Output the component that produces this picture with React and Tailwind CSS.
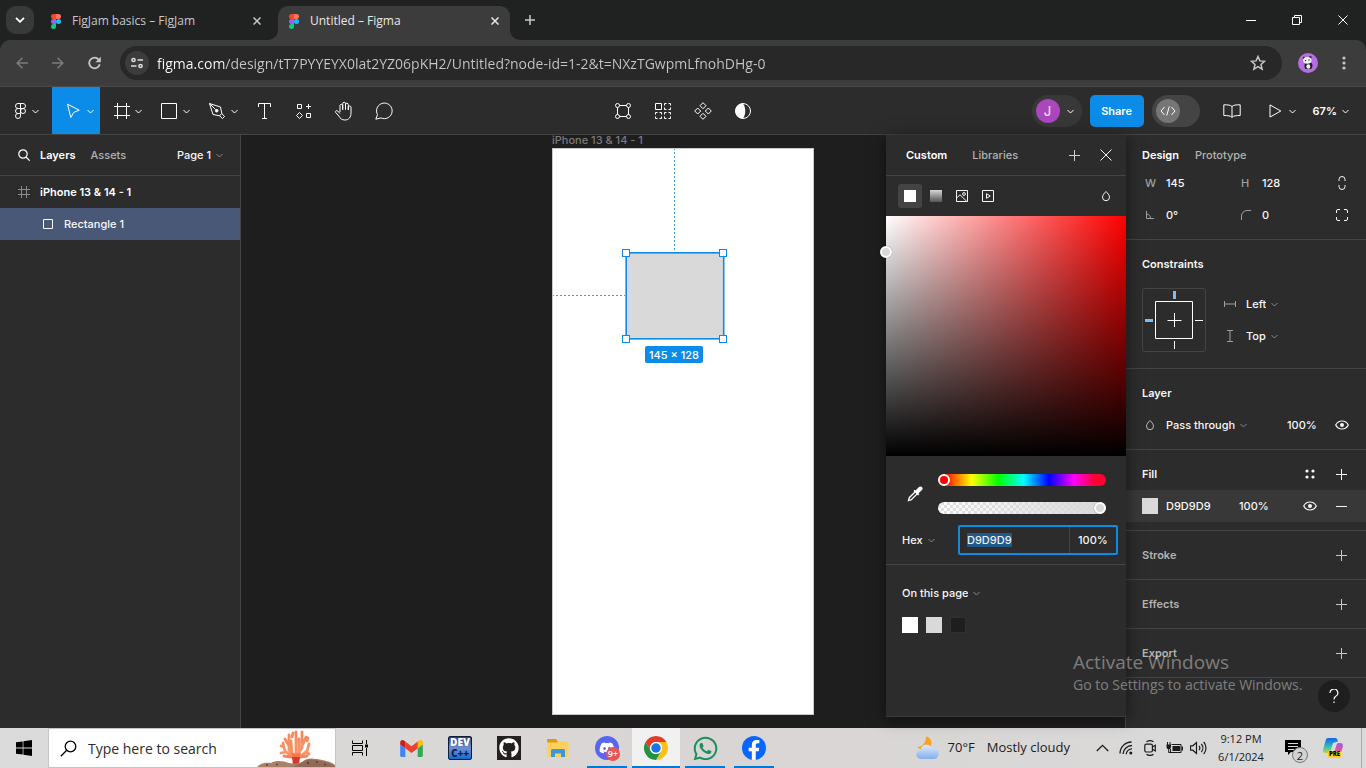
import { useEffect, useRef } from "react";
import { FaDiscord, FaFacebookF, FaGithub, FaWhatsapp } from "react-icons/fa";

const SEGOE = "font-['Open_Sans','Noto_Sans',sans-serif]";

function Icon({ w = 16, h = w, children, className = "", sw = 1, fill = "none" }) {
  return (
    <svg
      width={w}
      height={h}
      viewBox={`0 0 ${w} ${h}`}
      fill={fill}
      stroke="currentColor"
      strokeWidth={sw}
      className={`shrink-0 ${className}`}
      aria-hidden="true"
    >
      {children}
    </svg>
  );
}

const Chevron = ({ className = "" }) => (
  <Icon w={7} h={5} className={className}>
    <path d="M.5 1l3 3 3-3" />
  </Icon>
);
const Plus = ({ size = 11, sw = 1, className = "" }) => (
  <Icon w={size} sw={sw} className={className}>
    <path d={`M${size / 2} 0v${size}M0 ${size / 2}h${size}`} />
  </Icon>
);
const Cross = ({ size = 10, sw = 1 }) => (
  <Icon w={size} sw={sw}>
    <path d={`M.5 .5l${size - 1} ${size - 1}M${size - 0.5} .5L.5 ${size - 0.5}`} />
  </Icon>
);
const Drop = () => (
  <Icon w={10} h={12}>
    <path d="M5 1.5C6.5 3.2 8.5 5 8.5 7.2a3.5 3.5 0 0 1-7 0C1.500 5 3.500 3.200 5 1.500z" />
  </Icon>
);
const Eye = () => (
  <Icon w={14} h={10} sw={1.2}>
    <path d="M.7 5C2 2.400 4.400 1 7 1s5 1.400 6.300 4C12 7.600 9.600 9 7 9S2 7.600.7 5z" />
    <circle cx="7" cy="5" r="2" fill="currentColor" stroke="none" />
  </Icon>
);
const FigmaLogo = () => (
  <Icon w={10} h={15}>
    <g stroke="none">
      <path d="M2.500 0H5v5H2.500a2.500 2.500 0 0 1 0-5z" fill="#f24e1e" />
      <path d="M5 0h2.500a2.500 2.500 0 0 1 0 5H5z" fill="#ff7262" />
      <path d="M2.500 5H5v5H2.500a2.500 2.500 0 0 1 0-5z" fill="#a259ff" />
      <circle cx="7.500" cy="7.500" r="2.500" fill="#1abcfe" />
      <path d="M2.500 10H5v2.500A2.500 2.500 0 1 1 2.500 10z" fill="#0acf83" />
    </g>
  </Icon>
);

function TabStrip() {
  return (
    <div className="flex h-10 shrink-0 bg-[#202221] text-[#c7c7c7]">
      <button aria-label="Search tabs" className="mt-1.5 ml-1.5 flex size-7 shrink-0 items-center justify-center rounded-[10px] bg-[#383a39] text-white">
        <Icon w={10} h={6} sw={1.8}>
          <path d="M1 .8l4 4 4-4" />
        </Icon>
      </button>
      <div className="mt-1.5 flex h-[30px] w-[244px] items-center pr-[17px] pl-[17px]">
        <FigmaLogo />
        <span className="ml-[11px] flex-1 text-[12px]">FigJam basics – FigJam</span>
        <button aria-label="Close FigJam basics"><Cross size={8} sw={1.500} /></button>
      </div>
      <div className="relative mt-1.5 flex h-[34px] w-[232px] items-center rounded-t-[10px] bg-[#3c3c3c] px-[11px] pb-1 text-[#e8e8e8]">
        <svg width="10" height="10" className="absolute bottom-0 -left-2.5" aria-hidden="true">
          <path d="M10 0v10H0A10 10 0 0 0 10 0z" fill="#3c3c3c" />
        </svg>
        <svg width="10" height="10" className="absolute -right-2.5 bottom-0" aria-hidden="true">
          <path d="M0 0v10h10A10 10 0 0 1 0 0z" fill="#3c3c3c" />
        </svg>
        <FigmaLogo />
        <span className="ml-[11px] flex-1 text-[12px]">Untitled – Figma</span>
        <button aria-label="Close Untitled"><Cross size={8} sw={1.500} /></button>
      </div>
      <button aria-label="New tab" className="ml-2 flex w-6 items-center justify-center"><Plus size={10} sw={1.500} /></button>
      <div className="ml-auto flex text-white">
        <button aria-label="Minimize" className="flex w-[46px] items-center justify-center"><Icon w={10} h={1}><path d="M0 .5h10" /></Icon></button>
        <button aria-label="Restore" className="flex w-[46px] items-center justify-center">
          <Icon w={10}><path d="M.5 2.500h7v7h-7zM2.500 2.500v-2h7v7h-2" /></Icon>
        </button>
        <button aria-label="Close" className="flex w-[46px] items-center justify-center"><Cross size={10} /></button>
      </div>
    </div>
  );
}

function AddressBar() {
  return (
    <div className="shrink-0 bg-[#202221]">
      <div className="flex h-[47px] items-center rounded-t-[10px] border-b border-[#4a4a4a] bg-[#3c3c3c] pr-2.5 pl-1 text-[#c7c7c7]">
        <button aria-label="Back" className="flex size-9 items-center justify-center text-[#7c7c7c]">
          <Icon w={12} h={12} sw={1.500}><path d="M6.500 .7L1.200 6l5.300 5.300M1.200 6H12" /></Icon>
        </button>
        <button aria-label="Forward" className="flex size-9 items-center justify-center text-[#7c7c7c]">
          <Icon w={12} h={12} sw={1.500}><path d="M5.500 .7L10.800 6l-5.300 5.300M10.800 6H0" /></Icon>
        </button>
        <button aria-label="Reload" className="flex size-9 items-center justify-center">
          <Icon w={13} h={14} sw={1.800}>
            <path d="M11.700 8.200A5.300 5.300 0 1 1 10.600 3.600" />
            <path d="M12.800 .8v5.400H7.400l2-2z" fill="currentColor" stroke="none" />
          </Icon>
        </button>
        <div className="ml-2 flex h-[34px] flex-1 items-center rounded-full bg-[#282828] pr-4 pl-[5px]">
          <button aria-label="Site information" className="flex size-6 items-center justify-center rounded-full bg-[#3c3c3c] text-[#e0e0e0]">
            <Icon w={12} h={12} sw={1.500}>
              <circle cx="2.500" cy="3" r="1.600" />
              <path d="M6.500 3H12M0 9h5.500" />
              <circle cx="9.500" cy="9" r="1.600" />
            </Icon>
          </button>
          <input
            aria-label="Address"
            defaultValue="figma.com/design/tT7PYYEYX0lat2YZ06pKH2/Untitled?node-id=1-2&t=NXzTGwpmLfnohDHg-0"
            className="ml-2 min-w-0 flex-1 bg-[linear-gradient(to_right,#ffffff_67px,#c7c7c7_67px)] bg-clip-text text-[14px] text-transparent outline-none"
          />
          <button aria-label="Bookmark this tab">
            <Icon w={16} h={16} sw={1.500}><path d="M8 1.500l1.900 4.400 4.700.4-3.600 3.100 1.100 4.700L8 11.600l-4.100 2.500L5 9.400 1.400 6.300l4.700-.4z" /></Icon>
          </button>
        </div>
        <button aria-label="Profile" className="ml-4">
          <Icon w={20}>
            <g stroke="none">
              <circle cx="10" cy="10" r="10" fill="#b66fe3" />
              <path d="M6.500 12c0-2 1.500-3 4-3s4 1.200 4 3.500-1 3.500-2 3.500H8c-1.500 0-1.500-2-1.500-4z" fill="#222" />
              <ellipse cx="10.300" cy="13.500" rx="2" ry="2.200" fill="#f4f4f4" />
              <circle cx="6" cy="5" r="1.200" fill="#222" />
              <circle cx="12.300" cy="4.200" r="1.200" fill="#222" />
              <ellipse cx="9.300" cy="7.300" rx="4.200" ry="3.400" fill="#f4f4f4" />
              <circle cx="7.600" cy="7.600" r=".7" fill="#222" />
              <circle cx="11" cy="7" r=".7" fill="#222" />
            </g>
          </Icon>
        </button>
        <button aria-label="Browser menu" className="ml-[14px] flex w-6 justify-center">
          <Icon w={4} h={14}>
            <g fill="currentColor" stroke="none"><circle cx="2" cy="2" r="1.600" /><circle cx="2" cy="7" r="1.600" /><circle cx="2" cy="12" r="1.600" /></g>
          </Icon>
        </button>
      </div>
    </div>
  );
}

function ToolMenu({ label, children, active }) {
  return (
    <button aria-label={label} className={`flex h-12 w-12 items-center justify-between pr-[6px] pl-3 ${active ? "bg-[#0c8ce9]" : ""}`}>
      {children}
      <Chevron />
    </button>
  );
}
const Tool = ({ label, children }) => (
  <button aria-label={label} className="flex h-12 w-10 items-center justify-center">{children}</button>
);

function Toolbar() {
  return (
    <header className="grid h-12 shrink-0 grid-cols-[1fr_auto_1fr] overflow-hidden border-b border-[#444444] bg-[#2c2c2c] text-white">
      <div className="flex">
        <button aria-label="Main menu" className="flex h-12 w-[52px] items-center gap-[6px] pl-[15px]">
          <Icon w={11} h={16}>
            <path d="M3 .5h2.500v5H3a2.500 2.500 0 0 1 0-5zM5.500 .5H8a2.500 2.500 0 0 1 0 5H5.500zM3 5.500h2.500v5H3a2.500 2.500 0 0 1 0-5zM8 5.500a2.500 2.500 0 1 1 0 5 2.500 2.500 0 0 1 0-5zM3 10.500h2.500V13A2.500 2.500 0 1 1 3 10.500z" />
          </Icon>
          <Chevron />
        </button>
        <ToolMenu label="Move" active>
          <Icon w={18} h={16}><path d="M3.500 1.200L15.200 7.200 9.800 9.300l-3 5.200z" /></Icon>
        </ToolMenu>
        <ToolMenu label="Frame">
          <Icon w={18}><path d="M5.500 1v16M14.500 1v16M2 4.500h16M2 13.500h16" /></Icon>
        </ToolMenu>
        <ToolMenu label="Rectangle">
          <Icon w={18} h={16}><path d="M1.500 .5h15v15h-15z" /></Icon>
        </ToolMenu>
        <ToolMenu label="Pen">
          <Icon w={18} h={16}>
            <path d="M1.500 .5L12.500 4l1.300 6.500 2.700 3-2 2-3-2.700L5 11.500zM1.500 .5l6 6M14 10.300L11.300 13" />
            <circle cx="8.700" cy="7.700" r="1.300" fill="currentColor" />
          </Icon>
        </ToolMenu>
        <div className="flex">
          <Tool label="Text"><Icon w={13} h={16}><path d="M.5 4V.5h12V4M6.500 .5v15M4 15.500h5" /></Icon></Tool>
          <Tool label="Resources">
            <Icon w={16}><path d="M1.500 1.500h4v4h-4zM10.500 10.500h4v4h-4zM12.500 1v5M10 3.500h5M3.500 9.500l3 3-3 3-3-3z" /></Icon>
          </Tool>
          <Tool label="Hand">
            <Icon w={20} h={20}>
              <path d="M6 11V4.300a1.400 1.400 0 0 1 2.700 0V9M8.700 8.500V2.700a1.400 1.400 0 0 1 2.800 0V8.500M11.500 8.500V3.600a1.400 1.400 0 0 1 2.800 0V9M14.300 9V6a1.400 1.400 0 0 1 2.700 0v6c0 4-2 7-6.200 7-3 0-4.500-1.500-6-4L1.500 11.300c-.6-1.200 1.200-2.300 2.200-1.300L6 12.500" />
            </Icon>
          </Tool>
          <Tool label="Comment">
            <Icon w={18}><path d="M.8 17.200l1.700-4.600A7.800 7.800 0 1 1 6 15.900z" /></Icon>
          </Tool>
        </div>
      </div>
      <div className="flex">
        <Tool label="Edit object">
          <Icon w={16}>
            <circle cx="2.500" cy="2.500" r="2" /><circle cx="13.500" cy="2.500" r="2" /><circle cx="2.500" cy="13.500" r="2" /><circle cx="13.500" cy="13.500" r="2" />
            <path d="M4.500 2.500h7M4.500 13.500h7M2.500 4.500v7M13.500 4.500v7" />
          </Icon>
        </Tool>
        <Tool label="Create grid">
          <Icon w={16}>
            <path d="M.5 .5h6v6h-6z" />
            <path d="M9.500 2.500v-2h2M13.500 .5h2v2M15.500 4.500v2h-2M11.500 6.500h-2v-2M.5 11.500v-2h2M4.500 9.500h2v2M6.500 13.500v2h-2M2.500 15.500h-2v-2M9.500 11.500v-2h2M13.500 9.500h2v2M15.500 13.500v2h-2M11.500 15.500h-2v-2" />
          </Icon>
        </Tool>
        <Tool label="Create component">
          <Icon w={18}><path d="M9 .7l3 3-3 3-3-3zM9 11.300l3 3-3 3-3-3zM3.700 6l3 3-3 3-3-3zM14.300 6l3 3-3 3-3-3z" /></Icon>
        </Tool>
        <Tool label="Mask">
          <Icon w={16}><circle cx="8" cy="8" r="7.500" /><path d="M8 .5c-10 0-10 15 0 15 3-4 3-11 0-15z" fill="currentColor" stroke="none" /></Icon>
        </Tool>
      </div>
      <div className="flex h-12 items-center justify-end text-[11px] font-medium">
        <button aria-label="Account J" className="flex h-8 w-[50px] items-center gap-[7px] rounded-full bg-[#383838] pl-1">
          <span className="flex size-6 items-center justify-center rounded-full bg-[#aa47bc] text-[13px] text-[#f0d8f4]">J</span>
          <Chevron />
        </button>
        <button className="ml-2 h-8 w-[54px] rounded-[5px] bg-[#0c8ce9] font-semibold">Share</button>
        <button role="switch" aria-checked="false" aria-label="Dev Mode" className="ml-2 flex h-8 w-12 items-center rounded-full bg-[#444444] pl-1">
          <span className="flex size-6 items-center justify-center rounded-full bg-[#767676]">
            <Icon w={16} h={10}><path d="M4.500 1L1 5l3.500 4M11.500 1L15 5l-3.500 4M9.300 .5l-2.600 9" /></Icon>
          </span>
        </button>
        <button aria-label="Libraries" className="ml-[23px]">
          <Icon w={18} h={14}><path d="M9 2.500C7.500 1 5 .8 .8 .8v10.700c4.200 0 6.700.3 8.200 1.800 1.500-1.500 4-1.800 8.200-1.800V.8C13 .8 10.500 1 9 2.500zM9 2.500v10.800" /></Icon>
        </button>
        <button aria-label="Present" className="ml-[28px] flex items-center gap-[7px]">
          <Icon w={13} h={14}><path d="M1 .9L11.800 7 1 13.100z" /></Icon>
          <Chevron />
        </button>
        <button className="mr-[17px] ml-[17px] flex items-center gap-[5px] font-semibold">67%<Chevron /></button>
      </div>
    </header>
  );
}

function LayersPanel() {
  return (
    <aside className="w-[241px] shrink-0 border-r border-[#444444] bg-[#2c2c2c]">
      <div className="flex h-[41px] items-center border-b border-[#444444] pr-[17px] pl-[18px]">
        <button aria-label="Search layers" className="text-white">
          <Icon w={12} sw={1.200}><circle cx="5" cy="5" r="4.200" /><path d="M8 8l3.700 3.700" /></Icon>
        </button>
        <button className="ml-[10px] font-semibold text-white">Layers</button>
        <button className="ml-[15px] text-[#b3b3b3]">Assets</button>
        <button className="ml-auto flex items-center gap-[5px]">Page 1<Chevron className="text-[#8a8a8a]" /></button>
      </div>
      <ul>
        <li className="flex h-8 items-center gap-[10px] pl-[18px] font-semibold text-white">
          <Icon w={12} className="text-[#8c8c8c]"><path d="M3.500 0v12M8.500 0v12M0 3.500h12M0 8.500h12" /></Icon>
          iPhone 13 &amp; 14 - 1
        </li>
        <li className="flex h-8 items-center gap-[11px] bg-[#4a5878] pl-[43px]">
          <Icon w={10}><path d="M.5 .5h9v9h-9z" /></Icon>
          Rectangle 1
        </li>
      </ul>
    </aside>
  );
}

function Artboard() {
  return (
    <div className="flex h-full justify-center overflow-hidden pt-[13px] pb-[13px]">
      <div className="relative h-full max-h-[567px] w-[262px] border border-[#c8c8c8] bg-white">
        <span className="absolute -top-4 -left-px leading-[14px] whitespace-nowrap text-[#7a7a7a]">iPhone 13 &amp; 14 - 1</span>
        <svg width="180" height="196" className="absolute -top-px -left-px" fill="none" aria-hidden="true">
          <path d="M122.500 1v103M1 147.500h72" stroke="#2ba0f5" strokeDasharray="2 2" strokeDashoffset="1" />
          <rect x="74.200" y="104.800" width="97.500" height="86" fill="#d9d9d9" stroke="#0c8ce9" strokeWidth="1.600" />
          <g fill="#fff" stroke="#0c8ce9">
            <rect x="70.500" y="101.500" width="7" height="7" />
            <rect x="167.500" y="101.500" width="7" height="7" />
            <rect x="70.500" y="187.500" width="7" height="7" />
            <rect x="167.500" y="187.500" width="7" height="7" />
          </g>
        </svg>
        <span className="absolute top-[197px] left-[92px] flex h-[17px] w-[58px] items-center justify-center rounded-[2px] bg-[#0c8ce9] whitespace-nowrap text-white">145 × 128</span>
      </div>
    </div>
  );
}

function Choice({ label, options, className = "" }) {
  return (
    <label className={`flex items-center gap-[5px] ${className}`}>
      <select aria-label={label} className="field-sizing-content appearance-none bg-transparent outline-none">
        {options.map((o) => <option key={o}>{o}</option>)}
      </select>
      <Chevron className="text-[#8a8a8a]" />
    </label>
  );
}

function ColorPicker() {
  const hex = useRef(null);
  useEffect(() => {
    hex.current.focus();
    hex.current.select();
  }, []);
  return (
    <section aria-label="Color picker" className="absolute top-0 -right-px z-10 h-[582px] w-60 border-b border-[#3c3c3c] bg-[#2c2c2c] shadow-[0_2px_14px_rgba(0,0,0,0.5)]">
      <div className="flex h-[41px] items-center border-b border-[#444444] pr-[14px] pl-5">
        <button className="font-semibold text-white">Custom</button>
        <button className="ml-[25px] text-[#b3b3b3]">Libraries</button>
        <button aria-label="Create style" className="ml-auto"><Plus className="text-[#d0d0d0]" /></button>
        <button aria-label="Close picker" className="ml-5"><Cross size={12} /></button>
      </div>
      <div className="flex h-10 items-center pr-[15px] pl-3">
        <button aria-label="Solid" className="flex size-6 items-center justify-center rounded-[3px] bg-[#444444]"><span className="size-3 bg-white" /></button>
        <button aria-label="Gradient" className="ml-2 size-3 bg-linear-to-b from-[#d8d8d8] to-[#555555]" />
        <button aria-label="Image" className="ml-[14px]">
          <Icon w={12}><path d="M.5 .5h11v11H.5zM.5 8L4 4.800l6.700 6.500" /><circle cx="8" cy="4" r="1.400" /></Icon>
        </button>
        <button aria-label="Video" className="ml-[14px]">
          <Icon w={12}><path d="M.5 .5h11v11H.5zM4.500 3.700L8.200 6 4.500 8.300z" /></Icon>
        </button>
        <button aria-label="Blend mode" className="ml-auto"><Drop /></button>
      </div>
      <div className="relative h-60 bg-[linear-gradient(to_top,#000,transparent),linear-gradient(to_right,#fff,#f00)]">
        <span className="absolute top-[30px] -left-1.5 size-3 rounded-full border-2 border-white bg-[#d9d9d9] shadow-[0_0_1px_rgba(0,0,0,0.5)]" />
      </div>
      <div className="flex items-center gap-[15px] pt-[18px] pr-5 pl-[21px] text-white">
        <button aria-label="Pick color">
          <Icon w={16}>
            <path d="M8.500 4.500l3.500-3.400a2 2 0 0 1 2.900 2.900L11.500 7.500l.8.800-1.200 1.200L6.500 4.900l1.200-1.200z" fill="currentColor" stroke="none" />
            <path d="M8 6l-5.700 5.700-.8 2.800 2.800-.8L10 8" strokeWidth="1.300" />
          </Icon>
        </button>
        <div className="flex flex-1 flex-col gap-4">
          <input
            type="range" aria-label="Hue" min="0" max="360" defaultValue="0"
            className="h-3 w-full appearance-none rounded-full bg-[linear-gradient(to_right,#f00_6px,#ff0_20%,#0f0_36%,#0ff_51%,#00f_66%,#f0f_81%,#f03_93%)] [&::-webkit-slider-thumb]:size-3 [&::-webkit-slider-thumb]:appearance-none [&::-webkit-slider-thumb]:rounded-full [&::-webkit-slider-thumb]:border-2 [&::-webkit-slider-thumb]:border-white [&::-webkit-slider-thumb]:bg-[#ff0000]"
          />
          <input
            type="range" aria-label="Opacity" min="0" max="100" defaultValue="100"
            className="h-3 w-full appearance-none rounded-full bg-[linear-gradient(to_right,transparent,#d9d9d9),repeating-conic-gradient(#e0e0e0_0_25%,#ffffff_0_50%)] bg-[length:100%_100%,6px_6px] [&::-webkit-slider-thumb]:size-3 [&::-webkit-slider-thumb]:appearance-none [&::-webkit-slider-thumb]:rounded-full [&::-webkit-slider-thumb]:border-2 [&::-webkit-slider-thumb]:border-white [&::-webkit-slider-thumb]:bg-[#d9d9d9] [&::-webkit-slider-thumb]:shadow-[0_0_1px_rgba(0,0,0,0.6)]"
          />
        </div>
      </div>
      <div className="flex items-center border-b border-[#444444] pt-[11px] pr-2 pb-[9px] pl-4">
        <Choice label="Color model" options={["Hex", "RGB", "HSL"]} />
        <div className="ml-auto flex h-[30px] w-40 items-center rounded-[2px] border-2 border-[#0c8ce9] leading-[14px]">
          <input ref={hex} aria-label="Hex value" defaultValue="D9D9D9" className="w-[109px] bg-transparent pl-[7px] outline-none selection:bg-[#215a8a] selection:text-[#f0f0f0]" />
          <input aria-label="Opacity value" defaultValue="100%" className="h-full w-12 flex-1 border-l border-[#444444] bg-transparent pl-2 outline-none" />
        </div>
      </div>
      <div className="px-4 pt-5">
        <Choice label="Color source" options={["On this page", "Local styles"]} />
        <div className="mt-4 flex gap-2">
          <button aria-label="FFFFFF" className="size-4 bg-white" />
          <button aria-label="D9D9D9" className="size-4 bg-[#d9d9d9]" />
          <button aria-label="1E1E1E" className="size-4 border border-[#303030] bg-[#1e1e1e]" />
        </div>
      </div>
    </section>
  );
}

function Field({ label, icon, value }) {
  return (
    <label className="flex h-8 w-24 items-center">
      <span className="flex w-6 items-center pl-[3px] text-[#a0a0a0]">{icon}</span>
      <input aria-label={label} defaultValue={value} className="w-14 bg-transparent outline-none" />
    </label>
  );
}

const Section = ({ children, className = "py-2" }) => (
  <section className={`border-b border-[#444444] ${className}`}>{children}</section>
);
const Title = ({ children, muted, extra }) => (
  <div className="flex h-8 items-center pr-[19px] pl-4">
    <h2 className={`flex-1 font-semibold ${muted ? "text-[#b3b3b3]" : ""}`}>{children}</h2>
    {extra}
  </div>
);

function DesignPanel() {
  return (
    <aside className="w-[241px] shrink-0 border-l border-[#444444] bg-[#2c2c2c]">
      <div className="flex h-8 items-center gap-4 pt-2 pl-4">
        <button className="font-semibold text-white">Design</button>
        <button className="text-[#b3b3b3]">Prototype</button>
      </div>
      <Section className="pb-2">
        <div className="flex items-center pr-[17px] pl-4">
          <Field label="Width" icon="W" value="145" />
          <Field label="Height" icon="H" value="128" />
          <button aria-label="Constrain proportions" className="ml-auto flex w-[14px] justify-center">
            <Icon w={8} h={14}><path d="M1 5V3.500a3 3 0 0 1 6 0V5M1 9v1.500a3 3 0 0 0 6 0V9" /></Icon>
          </button>
        </div>
        <div className="flex items-center pr-[17px] pl-4">
          <Field label="Rotation" icon={<Icon w={9} h={9}><path d="M1.500 0v7.500H9M1.500 3a4.500 4.500 0 0 1 4 4.500" /></Icon>} value="0°" />
          <Field label="Corner radius" icon={<Icon w={10} h={10}><path d="M.5 10V6A5.500 5.500 0 0 1 6 .5h4" /></Icon>} value="0" />
          <button aria-label="Independent corners" className="ml-auto flex w-[14px] justify-center">
            <Icon w={12}><path d="M.5 4V2A1.500 1.500 0 0 1 2 .5h2M8 .5h2A1.500 1.500 0 0 1 11.500 2v2M11.500 8v2a1.500 1.500 0 0 1-1.500 1.500H8M4 11.500H2A1.500 1.500 0 0 1 .5 10V8" /></Icon>
          </button>
        </div>
      </Section>
      <Section className="pt-2 pb-4">
        <Title>Constraints</Title>
        <div className="mt-2 flex pl-4">
          <Icon w={64}>
            <rect x=".5" y=".5" width="63" height="63" rx="1.500" stroke="#444444" />
            <path d="M13.500 13.500h37v37h-37zM32.500 25v14M25.500 32.500h14M53 32.500h8M32.500 53v8" stroke="#fff" />
            <path d="M32.500 3v8M3 32.500h8" stroke="#7bbdf5" strokeWidth="3" />
          </Icon>
          <div className="ml-[18px]">
            <div className="flex h-8 items-center gap-[10px]">
              <Icon w={12} h={6} className="text-[#a0a0a0]"><path d="M.5 0v6M11.500 0v6M.5 3h11" /></Icon>
              <Choice label="Horizontal constraint" options={["Left", "Right", "Center"]} />
            </div>
            <div className="flex h-8 items-center gap-[10px]">
              <Icon w={12} h={12} className="text-[#a0a0a0]"><path d="M3 .5h6M3 11.500h6M6 .5v11" /></Icon>
              <Choice label="Vertical constraint" options={["Top", "Bottom", "Center"]} />
            </div>
          </div>
        </div>
      </Section>
      <Section>
        <Title>Layer</Title>
        <div className="flex h-8 items-center pr-[17px] pl-[19px]">
          <span className="mr-[11px] text-[#c0c0c0]"><Drop /></span>
          <Choice label="Blend mode" options={["Pass through", "Normal"]} />
          <input aria-label="Layer opacity" defaultValue="100%" className="ml-auto w-8 bg-transparent outline-none" />
          <button aria-label="Toggle layer visibility" className="ml-4"><Eye /></button>
        </div>
      </Section>
      <Section>
        <Title
          extra={
            <>
              <button aria-label="Styles" className="mr-[21px]">
                <Icon w={10}>
                  <g fill="currentColor" stroke="none"><circle cx="2" cy="2" r="1.600" /><circle cx="8" cy="2" r="1.600" /><circle cx="2" cy="8" r="1.600" /><circle cx="8" cy="8" r="1.600" /></g>
                </Icon>
              </button>
              <button aria-label="Add fill"><Plus /></button>
            </>
          }
        >
          Fill
        </Title>
        <div className="flex h-8 items-center bg-[#383838] pr-[19px] pl-4">
          <button aria-label="Fill color" className="size-4 bg-[#d9d9d9]" />
          <input aria-label="Fill hex" defaultValue="D9D9D9" className="ml-2 w-[73px] bg-transparent outline-none" />
          <input aria-label="Fill opacity" defaultValue="100%" className="w-8 bg-transparent outline-none" />
          <button aria-label="Toggle fill visibility" className="ml-auto"><Eye /></button>
          <button aria-label="Remove fill" className="ml-[19px]"><Icon w={11} h={1}><path d="M0 .5h11" /></Icon></button>
        </div>
      </Section>
      {["Stroke", "Effects", "Export"].map((t) => (
        <Section key={t}>
          <Title muted extra={<button aria-label={`Add ${t.toLowerCase()}`} className="text-[#c8c8c8]"><Plus /></button>}>{t}</Title>
        </Section>
      ))}
    </aside>
  );
}

const Coral = () => (
  <svg width="80" height="38" viewBox="0 0 80 38" className="shrink-0 self-end" fill="none" aria-hidden="true">
    <defs>
      <linearGradient id="coral" x1="0" y1="0" x2="0" y2="38" gradientUnits="userSpaceOnUse">
        <stop stopColor="#ee8658" /><stop offset=".6" stopColor="#ff9468" /><stop offset="1" stopColor="#ee5f36" />
      </linearGradient>
    </defs>
    <g stroke="url(#coral)" strokeWidth="2.800" strokeLinecap="round" strokeLinejoin="round">
      <path d="M41 31V3M41 29l-7-8V6M41 27l6-8V3M39 29l-9-7-2-8M43 29l9-7 2-7M34 17l-4-7M47 17l4-9M37 25l-1-13M44 25V10M30 23l-4 1M51 23l3 2M37 8l1-4M29 18l-3-1M52 12l1-3M36 28l-7-1M45 28l7-1" />
    </g>
    <path d="M36 23c2 2 8 2 10 0l-2 7h-6z" fill="#f5784c" />
    <path d="M37 28h8l-1 8h-6z" fill="#d8382c" />
    <path d="M2 38c3-4 9-5 14-4 5-3 12-2 18 0 5 1 8 1 13-1 4-4 9-4 15-3 6 1 13 2 18 6v2z" fill="#a98069" />
    <path d="M46 34c4-4 9-4 15-3 6 1 13 2 19 6v1H38z" fill="#80594a" opacity=".55" />
    <g fill="#5d4036"><circle cx="12" cy="36" r="1" /><circle cx="22" cy="35.500" r="1" /><circle cx="53" cy="34" r="1.200" /><circle cx="62" cy="33" r="1" /><circle cx="70" cy="35.500" r="1" /></g>
  </svg>
);

const Chrome = () => (
  <svg width="24" height="24" viewBox="0 0 48 48" aria-hidden="true">
    <path d="M24 12h20.780A24 24 0 0 0 3.216 12L13.608 30A12 12 0 0 1 24 12z" fill="#e33b2e" />
    <path d="M34.391 30L24.007 48A24 24 0 0 0 44.780 12H24A12 12 0 0 1 34.391 30z" fill="#fbc116" />
    <path d="M13.609 30L3.218 12A24 24 0 0 0 24.025 48L34.395 30A12 12 0 0 1 13.609 30z" fill="#229342" />
    <circle cx="24" cy="24" r="12" fill="#fff" /><circle cx="24" cy="24" r="9.500" fill="#1a73e8" />
  </svg>
);

function AppButton({ label, children, running, active }) {
  return (
    <button aria-label={label} className={`relative flex w-12 items-center justify-center ${active ? "bg-[#f1f1f1]" : ""}`}>
      {children}
      {running && <span className={`absolute bottom-0 h-0.5 bg-[#0078d7] ${active ? "inset-x-0" : "inset-x-1"}`} />}
    </button>
  );
}
const TrayButton = ({ label, children }) => (
  <button aria-label={label} className="flex w-6 items-center justify-center">{children}</button>
);

function Taskbar() {
  return (
    <footer className={`flex h-10 shrink-0 bg-linear-to-r from-[#dbdbdb] via-[#d9d5d4] to-[#dadada] text-[#1b1b1b] ${SEGOE}`}>
      <button aria-label="Start" className="flex w-12 items-center justify-center">
        <Icon w={16}><path d="M0 2.300l6.700-.9v6.200H0zM7.400 1.300L16 0v7.600H7.400zM0 8.400h6.700v6.200L0 13.700zM7.400 8.400H16V16l-8.600-1.300z" fill="#000" stroke="none" /></Icon>
      </button>
      <label className="flex w-[288px] items-center overflow-hidden border border-[#c4c4c4] bg-white pl-[11px]">
        <Icon w={17} h={17} sw={1.300} className="text-black"><circle cx="10.500" cy="6.500" r="5.300" /><path d="M6.700 10.300L.8 16.200" /></Icon>
        <input aria-label="Search" placeholder="Type here to search" className="ml-[11px] min-w-0 flex-1 text-[14px] outline-none placeholder:text-[#2c2c2c]" />
        <Coral />
      </label>
      <button aria-label="Task view" className="flex w-12 items-center justify-center text-black">
        <Icon w={16}>
          <path d="M.5 .5v3h10v-3M.5 5.500h10v5H.5zM.5 15.500v-3h10v3M14.500 0v4M14.500 8v8" /><path d="M13 4.500h3v3h-3z" fill="currentColor" stroke="none" />
        </Icon>
      </button>
      <div className="ml-[3px] flex gap-px">
        <AppButton label="Gmail">
          <svg width="23" height="17" viewBox="52 42 88 66" aria-hidden="true">
            <path fill="#4285f4" d="M58 108h14V74L52 59v43c0 3.320 2.690 6 6 6" />
            <path fill="#34a853" d="M120 108h14c3.320 0 6-2.690 6-6V59l-20 15" />
            <path fill="#fbbc04" d="M120 48v26l20-15v-8c0-7.420-8.470-11.650-14.400-7.200" />
            <path fill="#ea4335" d="M72 74V48l24 18 24-18v26L96 92" />
            <path fill="#c5221f" d="M52 51v8l20 15V48l-5.600-4.200c-5.940-4.450-14.400-.22-14.400 7.200" />
          </svg>
        </AppButton>
        <AppButton label="Dev-C++">
          <span className="flex size-6 flex-col items-center justify-between overflow-hidden rounded-[2px] border border-[#101c38] bg-linear-to-b from-[#24418c] via-[#6f8fd0] to-[#0d6bd0] font-['Open_Sans',sans-serif] text-[10px] leading-[11px] font-extrabold">
            <span className="text-white">DEV</span>
            <span className="text-[#06244f]">C++</span>
          </span>
        </AppButton>
        <AppButton label="GitHub"><span className="flex size-6 items-center justify-center bg-[#24201f] text-white"><FaGithub size={20} /></span></AppButton>
        <AppButton label="File Explorer">
          <Icon w={22} h={20}>
            <g stroke="none"><path d="M0 2a1 1 0 0 1 1-1h8l1.500 2H21v5H0z" fill="#e09c10" /><path d="M0 4.500h10l1-1.500h10.500v16H0z" fill="#ffd05c" /><path d="M4 19v-6.500A1.500 1.500 0 0 1 5.500 11h11a1.500 1.500 0 0 1 1.500 1.500V19h-4v-3.500H8V19z" fill="#3a97d8" /></g>
          </Icon>
        </AppButton>
        <AppButton label="Discord" running>
          <span className="relative flex size-6 items-center justify-center rounded-full bg-[#5865f2] text-white">
            <FaDiscord size={16} />
            <span className="absolute top-[11px] left-[11px] flex size-[14px] items-center justify-center rounded-full bg-[#eb5454] text-[9px] font-semibold">9+</span>
          </span>
        </AppButton>
        <AppButton label="Chrome" running active><Chrome /></AppButton>
        <AppButton label="WhatsApp" running><FaWhatsapp size={27} color="#1a8f5a" /></AppButton>
        <AppButton label="Facebook" running><span className="flex size-6 items-end justify-center overflow-hidden rounded-full bg-[#0866ff] text-white"><FaFacebookF size={20} /></span></AppButton>
      </div>
      <div className="ml-auto flex">
        <button className="mr-5 flex items-center text-[13px]">
          <Icon w={24} h={24}>
            <defs>
              <linearGradient id="cloud" x1="0" y1="10" x2="0" y2="24" gradientUnits="userSpaceOnUse"><stop stopColor="#d7e6fb" /><stop offset="1" stopColor="#7ea9ea" /></linearGradient>
            </defs>
            <g stroke="none">
              <path d="M10 .5c5 1 7 6 4.500 10.500-3 4.500-9 4-13.500 0 5 0 9-4 9-10.500z" fill="#f7a325" />
              <path d="M5 23a4.500 4.500 0 0 1-.5-9A6 6 0 0 1 15.800 12 5.500 5.500 0 1 1 18.500 23z" fill="url(#cloud)" />
            </g>
          </Icon>
          <span className="ml-2">70°F</span>
          <span className="ml-3">Mostly cloudy</span>
        </button>
        <TrayButton label="Show hidden icons"><Icon w={13} h={8} sw={1.300}><path d="M.8 7l5.700-5.700L12.200 7" /></Icon></TrayButton>
        <TrayButton label="Network">
          <Icon w={14} h={14} sw={1.300}><path d="M1 12.500A11.500 11.500 0 0 1 12.500 1M4 13a9 9 0 0 1 9-8.500M7.200 13.300A5.800 5.800 0 0 1 13 7.800" /><circle cx="11.800" cy="12" r="1.500" fill="currentColor" stroke="none" /></Icon>
        </TrayButton>
        <TrayButton label="Meet now">
          <Icon w={12} h={16} sw={1.200}><rect x=".8" y="4.200" width="7.600" height="7.800" rx="1.500" /><path d="M8.500 7l2.800-1.700v5.600L8.500 9.200M2.500 1.800C4.500 .4 7.500 .4 9.500 1.800M2.500 14.200c2 1.400 5 1.400 7 0" /></Icon>
        </TrayButton>
        <TrayButton label="Battery">
          <Icon w={17} h={12}><path d="M5.500 2.500H15v8H4.500V7" /><path d="M6.500 4H14v5H6.500zM15.500 4.500H17v4h-1.500zM.5 2.500h4.500v2.500a2 2 0 0 1-4.500 0z" fill="currentColor" stroke="none" /><path d="M1.500 0v3M4 0v3M2.700 6v4.500h3" /></Icon>
        </TrayButton>
        <TrayButton label="Volume">
          <Icon w={17} h={14} sw={1.200}><path d="M.5 4.800h2.300L6.500 1.500v11L2.800 9.200H.5zM9 5a3 3 0 0 1 0 4M11.300 3a6 6 0 0 1 0 8M13.700 1a9 9 0 0 1 0 12" /></Icon>
        </TrayButton>
        <button className="flex w-[62px] flex-col items-center justify-center text-[11px] leading-[18px] whitespace-nowrap">
          <span>9:12 PM</span>
          <span>6/1/2024</span>
        </button>
        <button aria-label="Notifications" className="relative flex w-12 items-center justify-center">
          <Icon w={22} h={20}>
            <path d="M0 1h16v12H6l-3 3v-3H0z" fill="#000" stroke="none" transform="translate(0 1)" /><path d="M3 5.500h10M3 8.500h10M3 11.500h6" stroke="#dadada" />
          </Icon>
          <span className="absolute top-[19px] left-5 flex size-4 items-center justify-center rounded-full border border-[#777777] bg-[#d2d2d2] text-[11px] leading-none">2</span>
        </button>
        <button aria-label="Copilot" className="mr-[15px] flex w-[26px] items-center justify-center">
          <span className="relative">
            <Icon w={20} h={20}>
              <defs>
                <linearGradient id="cpa" x1="0" y1="0" x2="0" y2="1"><stop stopColor="#1b62e8" /><stop offset=".5" stopColor="#22b5c8" /><stop offset="1" stopColor="#c6d63a" /></linearGradient>
                <linearGradient id="cpb" x1="0" y1="0" x2="0" y2="1"><stop stopColor="#a45be8" /><stop offset=".6" stopColor="#e8548f" /><stop offset="1" stopColor="#f5963c" /></linearGradient>
              </defs>
              <g stroke="none"><path d="M5 0h7c2 0 2.500 1.500 3 3.500L10 5 7.500 13c-.6 1.600-1.500 2-3 2H3c-3 0-3.400-2-2.700-4.500L2.500 3C3 1 3.500 0 5 0z" fill="url(#cpa)" /><path d="M15 19H8c1.500 0 2-1 2.500-2.500l3-9.500c.5-1.500 1.200-2 2.500-2h1c2.800 0 3.400 2 2.700 4.500L17.500 16c-.5 2-1 3-2.500 3z" fill="url(#cpb)" /></g>
            </Icon>
            <span className="absolute top-[13px] left-[5px] rounded-[1px] bg-[#ffcb1f] px-px text-[6px] leading-[7px] font-extrabold text-black">PRE</span>
          </span>
        </button>
        <button aria-label="Show desktop" className="w-[5px] border-l border-[#a8a8a8]" />
      </div>
    </footer>
  );
}

export default function App() {
  return (
    <div className={`relative flex h-screen flex-col overflow-hidden bg-[#1e1e1e] ${SEGOE}`}>
      <TabStrip />
      <AddressBar />
      <div className="flex min-h-0 flex-1 flex-col font-['Inter',sans-serif] text-[11px] leading-4 font-medium text-[#f7f7f7]">
        <Toolbar />
        <div className="relative flex min-h-0 flex-1">
          <LayersPanel />
          <main className="relative min-w-0 flex-1 bg-[#1e1e1e]">
            <Artboard />
            <ColorPicker />
          </main>
          <DesignPanel />
          <button aria-label="Help" className="absolute right-4 bottom-4 flex size-8 items-center justify-center rounded-full bg-[#1e1e1e] text-white">
            <Icon w={10} h={15} sw={1.200}><path d="M1 4a3.900 3.900 0 1 1 5.800 3.300C5.300 8.200 5 8.700 5 10.500M5 12.500v1.500" /></Icon>
          </button>
          <div className={`pointer-events-none absolute right-0 bottom-[33px] z-20 w-[293px] font-normal text-white/40 ${SEGOE}`}>
            <p className="text-[19px] leading-[26px]">Activate Windows</p>
            <p className="text-[14px] leading-5">Go to Settings to activate Windows.</p>
          </div>
        </div>
      </div>
      <Taskbar />
    </div>
  );
}
